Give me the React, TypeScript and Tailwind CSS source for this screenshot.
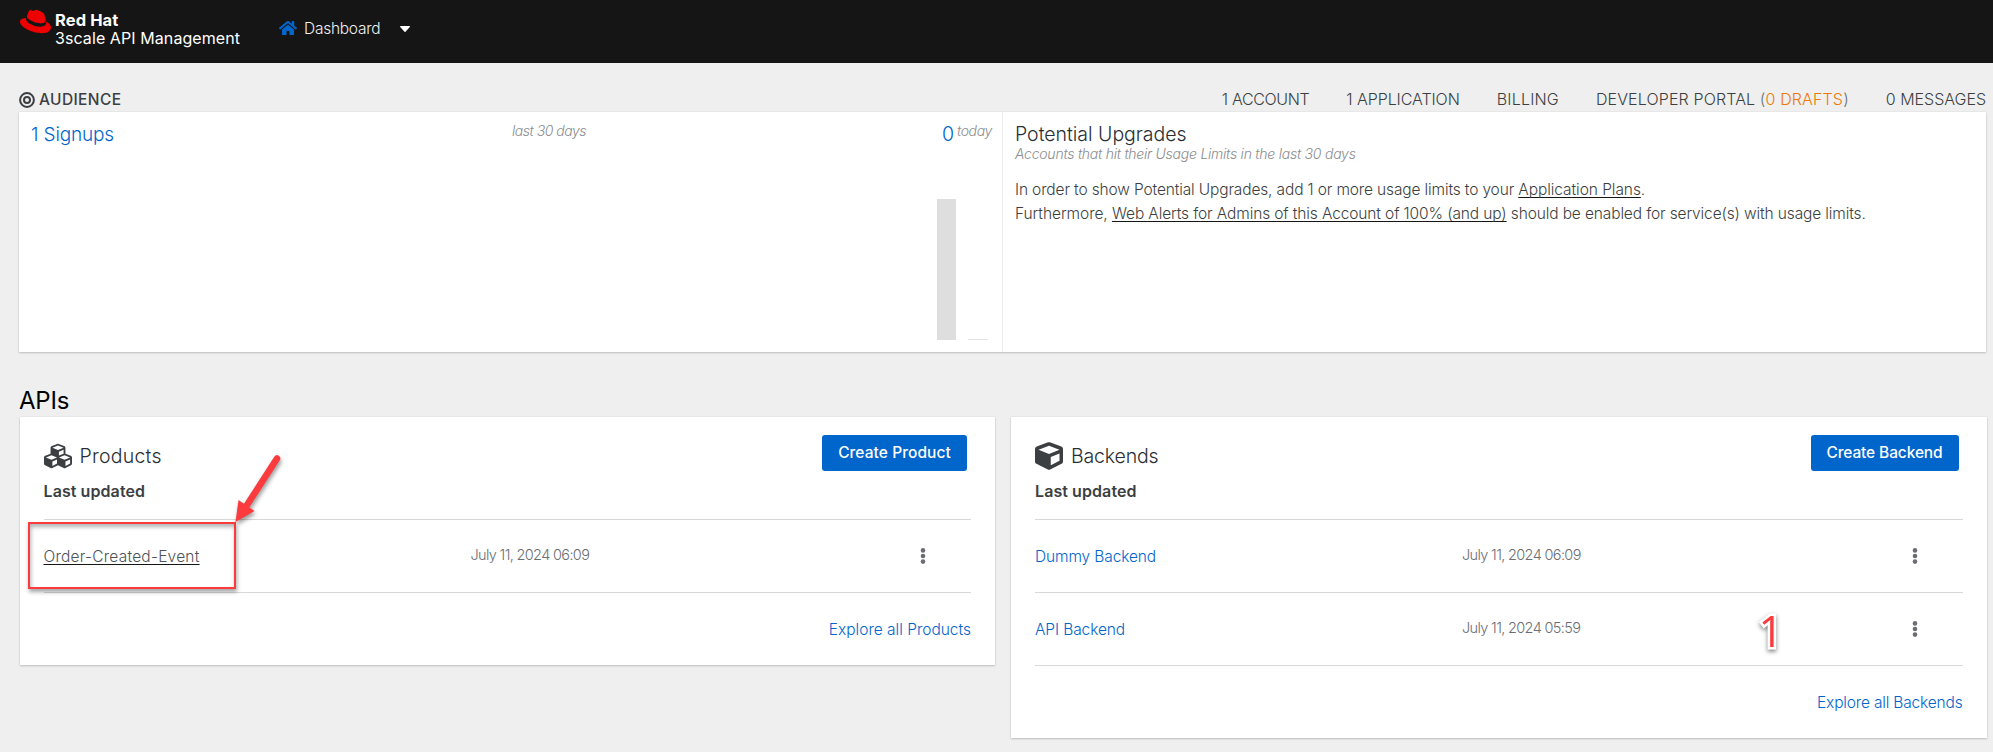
import React from "react";
import { FaCube, FaCubes, FaHome, FaRedhat } from "react-icons/fa";

const linkClass = "text-[#06c] font-light";
const underlineClass =
  "underline decoration-1 decoration-[#151515] underline-offset-2 [text-decoration-skip-ink:none]";
const cardClass = "bg-white shadow-[0_1px_2px_rgba(3,3,3,0.2),0_0_1px_rgba(3,3,3,0.12)]";

function BullseyeIcon() {
  return (
    <svg width="16" height="16" viewBox="0 0 16 16" fill="none" stroke="#3c3f42" strokeWidth="2">
      <circle cx="8" cy="8" r="6.9" />
      <circle cx="8" cy="8" r="3" />
    </svg>
  );
}

function Kebab() {
  return (
    <svg width="6" height="18" viewBox="0 0 6 18" fill="#6a6e73">
      <circle cx="3" cy="3.4" r="2.3" />
      <circle cx="3" cy="9" r="2.3" />
      <circle cx="3" cy="14.6" r="2.3" />
    </svg>
  );
}

function Header() {
  return (
    <header className="flex h-[63px] items-start bg-[#151515] text-white">
      <div className="flex w-[260px] pl-[19.5px]">
        <FaRedhat className="mt-[5.5px] shrink-0 text-[#e00]" size={31} />
        <div className="ml-[4.5px] mt-3 flex flex-col whitespace-nowrap leading-[18px]">
          <span className="text-[16.5px] font-bold leading-[17px] tracking-[0.1px]">Red Hat</span>
          <span className="text-base leading-[18px] tracking-[0.08px]">3scale API Management</span>
        </div>
      </div>
      <nav className="ml-[19px] mt-[18px] flex h-5 items-center">
        <FaHome className="text-[#06c]" size={18} />
        <span className="ml-[7px] mt-px text-[15.5px] font-[350] tracking-[-0.26px] text-[#f0f0f0]">Dashboard</span>
        <svg className="ml-5 mt-px" width="10" height="6" viewBox="0 0 10 6" fill="#fff">
          <path d="M.7 0h8.6c.6 0 .9.7.5 1.1L5.5 5.7c-.3.3-.7.3-1 0L.2 1.100C-.2.7.1 0 .7 0z" />
        </svg>
      </nav>
    </header>
  );
}

function AudienceNav() {
  return (
    <div className="flex h-[49px] items-start justify-between whitespace-nowrap pl-[19px] pr-[7px] pt-[26px] text-base leading-[21px] text-[#3c3f42]">
      <h2 className="flex items-center gap-1 text-[15.5px] font-medium tracking-[0.38px]">
        <BullseyeIcon />
        AUDIENCE
      </h2>
      <ul className="flex gap-[37px] font-light">
        <li className="tracking-[-0.35px]">1 ACCOUNT</li>
        <li className="tracking-[-0.07px]">1 APPLICATION</li>
        <li className="tracking-[0.18px]">BILLING</li>
        <li className="tracking-[0.13px]">
          DEVELOPER PORTAL <span className="text-[#6a6e73]">(</span>
          <span className="text-[#ec7a08]">0 DRAFTS</span>
          <span className="text-[#6a6e73]">)</span>
        </li>
        <li className="tracking-[-0.02px]">0 MESSAGES</li>
      </ul>
    </div>
  );
}

function AudienceCard() {
  return (
    <section className={`ml-[19px] flex h-60 w-[1967px] ${cardClass}`}>
      <div className="flex w-[984px] flex-col border-r border-[#ededed] pl-3">
        <div className="flex items-start whitespace-nowrap pt-[11px]">
          <span className="mt-px w-[481px] text-[19px] font-light leading-[21px] tracking-[-0.15px] text-[#06c]">
            1 Signups
          </span>
          <span className="w-[430px] text-sm font-light italic leading-[15px] tracking-[-0.48px] text-[#8a8d90]">
            last 30 days
          </span>
          <span className="mt-px w-[15px] text-[19.5px] font-light leading-[21px] text-[#06c]">0</span>
          <span className="text-sm font-light italic leading-[15px] tracking-[-0.38px] text-[#8a8d90]">today</span>
        </div>
        <div className="flex h-[195px] items-end justify-end gap-3 pr-[14px]">
          <div className="h-[141px] w-[19px] bg-[#dedede]" />
          <div className="h-px w-5 bg-[#e2e2e2]" />
        </div>
      </div>
      <div className="whitespace-nowrap pl-3 pt-[11px] font-light">
        <h3 className="text-[19.5px] leading-[22px] tracking-[-0.02px] text-[#292e34]">Potential Upgrades</h3>
        <p className="mt-px text-sm italic leading-4 tracking-[-0.24px] text-[#8a8d90]">
          Accounts that hit their Usage Limits in the last 30 days
        </p>
        <p className="mt-4 text-[15.5px] leading-6 tracking-[-0.14px] text-[#3c3f42]">
          In order to show Potential Upgrades, add 1 or more usage limits to your{" "}
          <a className={`tracking-[-0.06px] ${underlineClass}`}>Application Plans</a>.
          <br />
          <span className="tracking-[-0.06px]">Furthermore, </span>
          <a className={`tracking-[-0.12px] ${underlineClass}`}>
            Web Alerts for Admins of this Account of 100% (and up)
          </a>
          <span className="tracking-[-0.13px]"> should be enabled for service(s) with usage limits.</span>
        </p>
      </div>
    </section>
  );
}

type Entry = { name: React.ReactNode; date: string };

type ApiCardProps = {
  icon: React.ReactNode;
  title: React.ReactNode;
  button: React.ReactNode;
  entries: Entry[];
  explore: React.ReactNode;
};

function ApiCard({ icon, title, button, entries, explore }: ApiCardProps) {
  return (
    <section className={`w-[975.5px] whitespace-nowrap px-6 ${cardClass}`}>
      <div className="flex h-[102px] justify-between pr-1">
        <div className="text-[#3c3f42]">
          <h3 className="mt-[26px] flex h-[26px] items-center text-[19.5px] font-[350] leading-[26px] text-[#292e34]">
            <span className="mr-2 flex w-7 justify-center text-[#3c3f42]">{icon}</span>
            {title}
          </h3>
          <p className="mt-3 text-base font-semibold leading-5 tracking-[0.08px]">Last updated</p>
        </div>
        {button}
      </div>
      <ul>
        {entries.map((entry, i) => (
          <li key={i} className="flex h-[73px] items-center border-t border-[#d8d8d8]">
            <span className="mt-px w-[427px] text-[15.5px] leading-6">{entry.name}</span>
            <span className="mb-[3px] text-[14.5px] font-light leading-6 tracking-[-0.65px] text-[#6a6e73]">
              {entry.date}
            </span>
            <button className="mb-px ml-auto mr-[45px]">
              <Kebab />
            </button>
          </li>
        ))}
      </ul>
      <div className="flex h-[73px] items-center justify-end border-t border-[#d8d8d8] pt-px text-[15.5px]">
        {explore}
      </div>
    </section>
  );
}

const buttonClass =
  "mt-[18px] h-9 rounded-[3px] bg-[#06c] pb-px text-center text-[15.5px] font-medium text-white";

function Annotations() {
  return (
    <>
      <div className="absolute left-7 top-[522px] h-[67px] w-[208px] border-2 border-[#fb3b3e] shadow-[1px_3px_4px_rgba(0,0,0,0.35),inset_1px_3px_4px_rgba(0,0,0,0.3)]" />
      <svg
        className="absolute left-[225px] top-[445px] drop-shadow-[1px_3px_2px_rgba(0,0,0,0.4)]"
        width="70"
        height="90"
        viewBox="225 445 70 90"
        fill="#fb3b3e"
      >
        <path d="M277 458.500L247 505" stroke="#fb3b3e" strokeWidth="6.500" strokeLinecap="round" />
        <path d="M235.500 522L238.500 500L254.500 511Z" />
      </svg>
      <span className="absolute left-[1758.500px] top-[600.500px] text-[43px] font-medium leading-[60px] text-[#fb3b3e] drop-shadow-[0_2px_2px_rgba(0,0,0,0.5)] [-webkit-text-stroke:5px_white] [font-family:'Open_Sans',sans-serif] [paint-order:stroke_fill]">
        1
      </span>
    </>
  );
}

export default function App() {
  return (
    <div className="relative h-[752px] w-[1993px] overflow-hidden bg-[#efefef] font-['Inter',sans-serif]">
      <Header />
      <AudienceNav />
      <AudienceCard />
      <h2 className="ml-[19px] mt-[33px] text-2xl leading-8 tracking-[-0.2px] text-black">APIs</h2>
      <div className="ml-[19.5px] flex items-start gap-4">
        <ApiCard
          icon={<FaCubes size={28} />}
          title={<span className="tracking-[0.25px]">Products</span>}
          button={<button className={`w-[145px] tracking-[0.08px] ${buttonClass}`}>Create Product</button>}
          entries={[
            {
              name: (
                <a className={`font-light tracking-[0.23px] text-[#4d5258] ${underlineClass}`}>Order-Created-Event</a>
              ),
              date: "July 11, 2024 06:09",
            },
          ]}
          explore={<a className={linkClass}>Explore all Products</a>}
        />
        <ApiCard
          icon={<FaCube size={28} />}
          title={<span className="tracking-[-0.15px]">Backends</span>}
          button={<button className={`w-[148px] tracking-[-0.12px] ${buttonClass}`}>Create Backend</button>}
          entries={[
            {
              name: <a className={`tracking-[-0.12px] ${linkClass}`}>Dummy Backend</a>,
              date: "July 11, 2024 06:09",
            },
            {
              name: <a className={`tracking-[-0.1px] ${linkClass}`}>API Backend</a>,
              date: "July 11, 2024 05:59",
            },
          ]}
          explore={<a className={`tracking-[-0.17px] ${linkClass}`}>Explore all Backends</a>}
        />
      </div>
      <Annotations />
    </div>
  );
}
